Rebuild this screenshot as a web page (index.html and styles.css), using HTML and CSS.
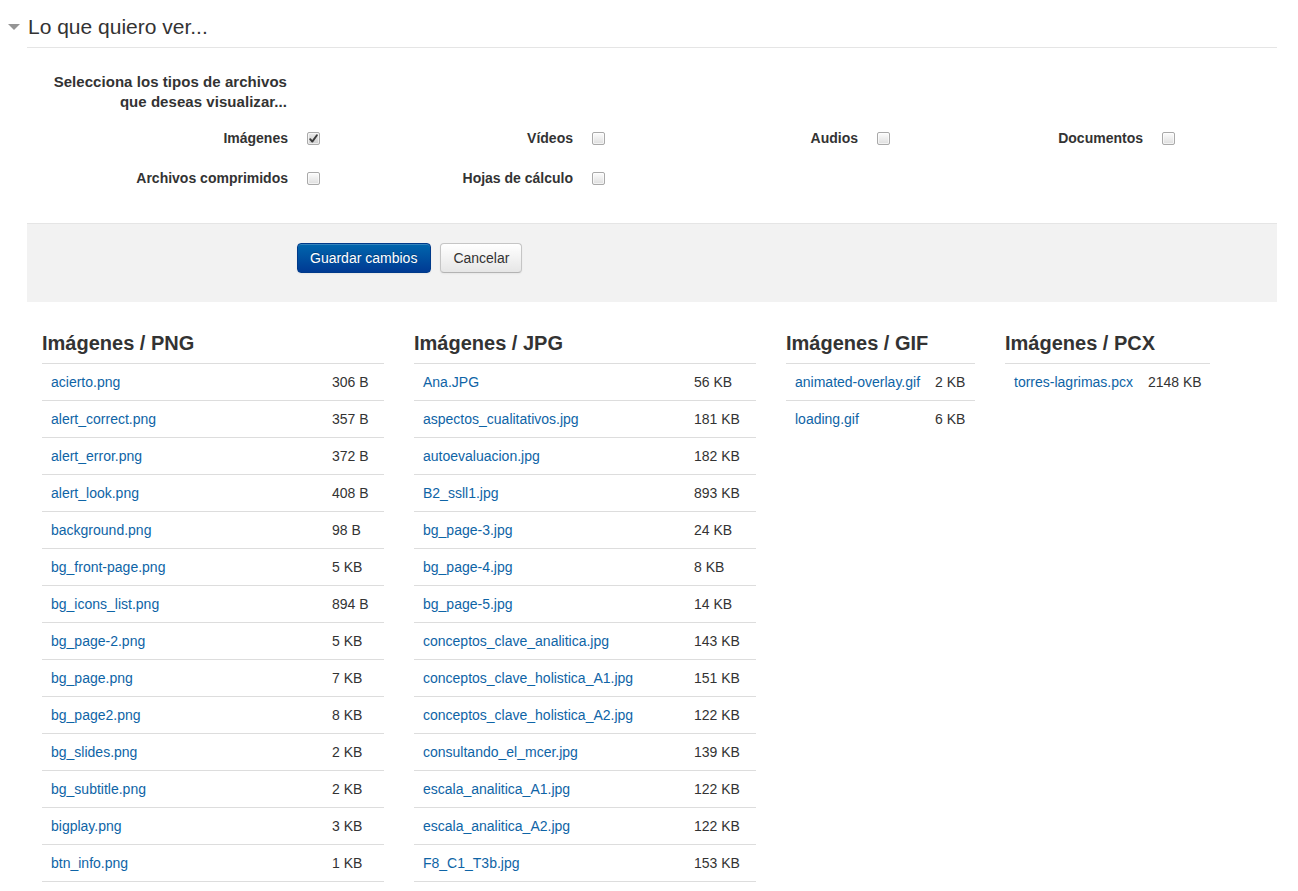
FILE: index.html
```html
<!DOCTYPE html>
<html lang="es">
<head>
<meta charset="utf-8">
<title>Lo que quiero ver...</title>
<link rel="stylesheet" href="styles.css">
</head>
<body>
<div class="page">
  <div class="legend">
    <span class="toggle"><svg width="12" height="6" viewBox="0 0 12 6"><polygon points="0,0 12,0 6,6" fill="#959595"/></svg></span>
    <h2 class="legend-title">Lo que quiero ver...</h2>
  </div>
  <div class="content">
    <form class="form">
      <div class="intro">Selecciona los tipos de archivos<br>que deseas visualizar...</div>
      <div class="options">
        <label class="option"><span class="opt-label">Imágenes</span><span class="cb checked" role="checkbox" aria-checked="true"><svg width="11" height="11" viewBox="0 0 11 11"><path d="M2.2 6.2 L4.3 8.6 L8.9 2.2" fill="none" stroke="#3a3a3a" stroke-width="1.9" stroke-linecap="round" stroke-linejoin="round"/></svg></span></label>
        <label class="option"><span class="opt-label">Vídeos</span><span class="cb" role="checkbox" aria-checked="false"></span></label>
        <label class="option"><span class="opt-label">Audios</span><span class="cb" role="checkbox" aria-checked="false"></span></label>
        <label class="option"><span class="opt-label">Documentos</span><span class="cb" role="checkbox" aria-checked="false"></span></label>
        <label class="option"><span class="opt-label">Archivos comprimidos</span><span class="cb" role="checkbox" aria-checked="false"></span></label>
        <label class="option"><span class="opt-label">Hojas de cálculo</span><span class="cb" role="checkbox" aria-checked="false"></span></label>
      </div>
      <div class="actions">
        <button type="button" class="btn btn-primary">Guardar cambios</button>
        <button type="button" class="btn">Cancelar</button>
      </div>
    </form>

    <div class="lists">
      <section class="filelist">
        <h3>Imágenes / PNG</h3>
        <table class="files files-png more">
          <colgroup><col class="c-name"><col class="c-size"></colgroup>
          <tr><td><a href="#">acierto.png</a></td><td>306 B</td></tr>
          <tr><td><a href="#">alert_correct.png</a></td><td>357 B</td></tr>
          <tr><td><a href="#">alert_error.png</a></td><td>372 B</td></tr>
          <tr><td><a href="#">alert_look.png</a></td><td>408 B</td></tr>
          <tr><td><a href="#">background.png</a></td><td>98 B</td></tr>
          <tr><td><a href="#">bg_front-page.png</a></td><td>5 KB</td></tr>
          <tr><td><a href="#">bg_icons_list.png</a></td><td>894 B</td></tr>
          <tr><td><a href="#">bg_page-2.png</a></td><td>5 KB</td></tr>
          <tr><td><a href="#">bg_page.png</a></td><td>7 KB</td></tr>
          <tr><td><a href="#">bg_page2.png</a></td><td>8 KB</td></tr>
          <tr><td><a href="#">bg_slides.png</a></td><td>2 KB</td></tr>
          <tr><td><a href="#">bg_subtitle.png</a></td><td>2 KB</td></tr>
          <tr><td><a href="#">bigplay.png</a></td><td>3 KB</td></tr>
          <tr><td><a href="#">btn_info.png</a></td><td>1 KB</td></tr>
        </table>
      </section>
      <section class="filelist">
        <h3>Imágenes / JPG</h3>
        <table class="files files-jpg more">
          <colgroup><col class="c-name"><col class="c-size"></colgroup>
          <tr><td><a href="#">Ana.JPG</a></td><td>56 KB</td></tr>
          <tr><td><a href="#">aspectos_cualitativos.jpg</a></td><td>181 KB</td></tr>
          <tr><td><a href="#">autoevaluacion.jpg</a></td><td>182 KB</td></tr>
          <tr><td><a href="#">B2_ssll1.jpg</a></td><td>893 KB</td></tr>
          <tr><td><a href="#">bg_page-3.jpg</a></td><td>24 KB</td></tr>
          <tr><td><a href="#">bg_page-4.jpg</a></td><td>8 KB</td></tr>
          <tr><td><a href="#">bg_page-5.jpg</a></td><td>14 KB</td></tr>
          <tr><td><a href="#">conceptos_clave_analitica.jpg</a></td><td>143 KB</td></tr>
          <tr><td><a href="#">conceptos_clave_holistica_A1.jpg</a></td><td>151 KB</td></tr>
          <tr><td><a href="#">conceptos_clave_holistica_A2.jpg</a></td><td>122 KB</td></tr>
          <tr><td><a href="#">consultando_el_mcer.jpg</a></td><td>139 KB</td></tr>
          <tr><td><a href="#">escala_analitica_A1.jpg</a></td><td>122 KB</td></tr>
          <tr><td><a href="#">escala_analitica_A2.jpg</a></td><td>122 KB</td></tr>
          <tr><td><a href="#">F8_C1_T3b.jpg</a></td><td>153 KB</td></tr>
        </table>
      </section>
      <section class="filelist">
        <h3>Imágenes / GIF</h3>
        <table class="files files-gif">
          <colgroup><col class="c-name"><col class="c-size"></colgroup>
          <tr><td><a href="#">animated-overlay.gif</a></td><td>2 KB</td></tr>
          <tr><td><a href="#">loading.gif</a></td><td>6 KB</td></tr>
        </table>
      </section>
      <section class="filelist">
        <h3>Imágenes / PCX</h3>
        <table class="files files-pcx">
          <colgroup><col class="c-name"><col class="c-size"></colgroup>
          <tr><td><a href="#">torres-lagrimas.pcx</a></td><td>2148 KB</td></tr>
        </table>
      </section>
    </div>
  </div>
</div>
</body>
</html>
```

FILE: styles.css
```css
html, body {
  margin: 0;
  padding: 0;
  background: #fff;
}

body {
  font-family: "Liberation Sans", Arial, Helvetica, sans-serif;
  font-size: 14px;
  line-height: 20px;
  color: #333;
}

.page {
  padding: 7px 21px 0 0;
}

.legend {
  display: flex;
  align-items: stretch;
}

.toggle {
  width: 30px;
  display: flex;
  align-items: center;
  justify-content: center;
  padding-right: 3px;
  box-sizing: border-box;
  height: 40px;
}

.toggle svg {
  display: block;
  margin-top: -1px;
}

.legend-title {
  flex: 1;
  margin: 0 0 0 -3px;
  font-size: 21px;
  font-weight: normal;
  line-height: 40px;
  color: #333;
  border-bottom: 1px solid #e5e5e5;
  padding-left: 1px;
}

.content {
  margin-left: 27px;
}

.form {
  margin: 0;
}

.intro {
  width: 260px;
  padding-top: 24px;
  text-align: right;
  font-weight: bold;
  font-size: 15px;
  line-height: 20px;
  letter-spacing: 0.05px;
}

.options {
  display: grid;
  grid-template-columns: repeat(4, 285px);
  row-gap: 20px;
  margin-top: 16px;
  padding-left: 8px;
}

.option {
  display: flex;
  align-items: center;
  height: 20px;
}

.opt-label {
  width: 253px;
  text-align: right;
  font-weight: bold;
}

.cb {
  width: 11px;
  height: 11px;
  margin-left: 19px;
  border: 1px solid #a9a9a9;
  border-radius: 2px;
  background: linear-gradient(#fdfdfd, #dedede);
  box-shadow: inset 0 0 0 1px rgba(255, 255, 255, 0.6);
  display: flex;
  align-items: center;
  justify-content: center;
}

.cb svg {
  display: block;
}

.cb.checked {
  background: linear-gradient(#e9e9e9, #cfcfcf);
}

.actions {
  margin-top: 35px;
  background: #f2f2f2;
  border-top: 1px solid #e5e5e5;
  padding: 19px 0 29px 270px;
  display: flex;
  gap: 9px;
}

.btn {
  font-family: "Liberation Sans", Arial, Helvetica, sans-serif;
  font-size: 14px;
  line-height: 20px;
  padding: 4px 12px;
  height: 30px;
  border-radius: 4px;
  border: 1px solid #c5c5c5;
  border-bottom-color: #b3b3b3;
  color: #333;
  background: linear-gradient(#ffffff, #e6e6e6);
  box-shadow: inset 0 1px 0 rgba(255, 255, 255, 0.2), 0 1px 2px rgba(0, 0, 0, 0.05);
  cursor: pointer;
}

.btn-primary {
  padding: 4px 13px 4px 12px;
  color: #fff;
  border-color: #003a8a;
  background: linear-gradient(#0066ad, #003a93);
  text-shadow: 0 -1px 0 rgba(0, 0, 0, 0.25);
}

.lists {
  display: flex;
  align-items: flex-start;
  gap: 30px;
  margin-top: 21px;
  padding-left: 15px;
}

.filelist h3 {
  margin: 0;
  font-size: 20px;
  line-height: 40px;
  font-weight: bold;
  color: #333;
}

.files {
  border-collapse: collapse;
  table-layout: fixed;
}

.files td {
  padding: 8px;
  line-height: 20px;
  border-top: 1px solid #ddd;
  vertical-align: top;
  white-space: nowrap;
  overflow: hidden;
}

.files td:first-child {
  padding-left: 9px;
}

.files.more tr:last-child td {
  border-bottom: 1px solid #ddd;
}

.files a {
  color: #0e64a6;
  text-decoration: none;
}

.files-png { width: 342px; }
.files-png .c-name { width: 282px; }
.files-png .c-size { width: 60px; }

.files-jpg { width: 342px; }
.files-jpg .c-name { width: 272px; }
.files-jpg .c-size { width: 70px; }

.files-gif { width: 189px; }
.files-gif .c-name { width: 141px; }
.files-gif .c-size { width: 48px; }

.files-pcx { width: 205px; }
.files-pcx .c-name { width: 135px; }
.files-pcx .c-size { width: 70px; }
```
